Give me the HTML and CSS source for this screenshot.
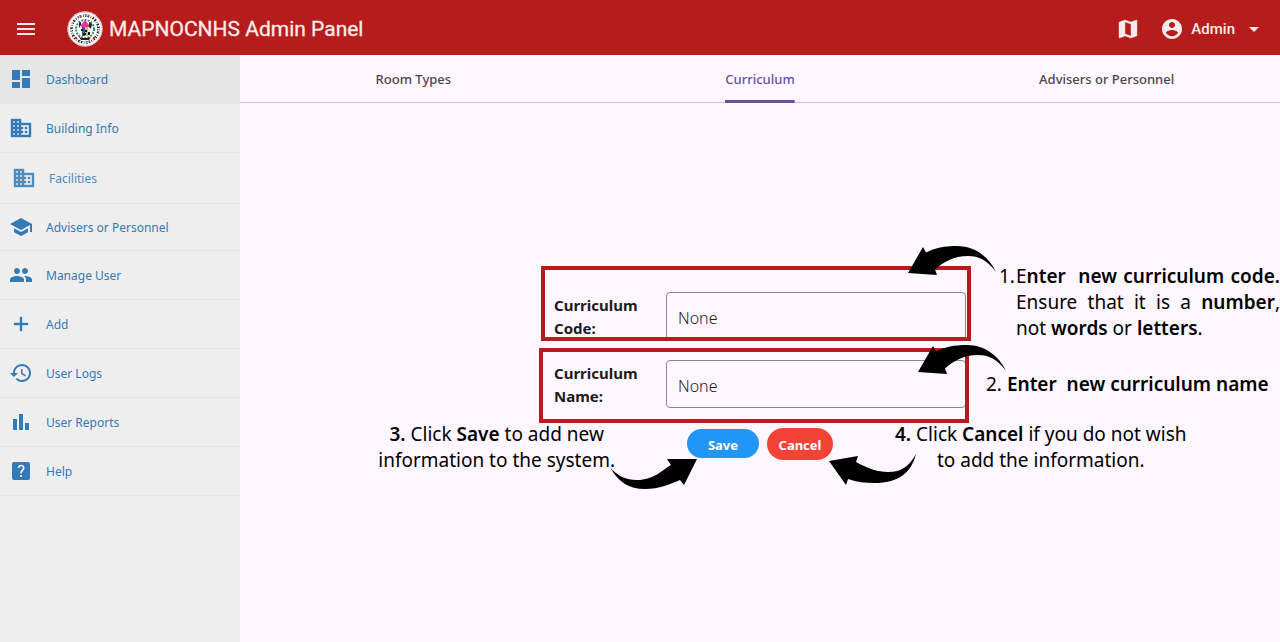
FILE: index.html
```html
<!DOCTYPE html>
<html lang="en">
<head>
<meta charset="utf-8">
<meta name="viewport" content="width=device-width, initial-scale=1">
<title>MAPNOCNHS Admin Panel</title>
<link rel="stylesheet" href="styles.css">
</head>
<body>
<svg class="defs" aria-hidden="true">
  <symbol id="building" viewBox="0 0 24 24"><path d="M12 7V3H2v18h20V7H12zM6 19H4v-2h2v2zm0-4H4v-2h2v2zm0-4H4V9h2v2zm0-4H4V5h2v2zm4 12H8v-2h2v2zm0-4H8v-2h2v2zm0-4H8V9h2v2zm0-4H8V5h2v2zm10 12h-8v-2h2v-2h-2v-2h2v-2h-2V9h8v10zm-2-8h-2v2h2v-2zm0 4h-2v2h2v-2z"/></symbol>
  <symbol id="arrow-in" viewBox="0 0 88 32"><path d="M0 28 15 2 18 7.500C27 3 36 1 49 1C67 1 81 12 88 27C79 15 71 11 60 11C46 11 35 17 27 24.500L29 30Z"/></symbol>
</svg>

<header class="topbar">
  <button class="icon-button" aria-label="Menu"><svg class="icon" viewBox="0 0 24 24"><path d="M3 18h18v-2H3v2zm0-5h18v-2H3v2zm0-7v2h18V6H3z"/></svg></button>
  <div class="brand">
    <svg class="seal" viewBox="0 0 36 36" aria-hidden="true">
      <circle cx="18" cy="18" r="17.500" fill="#fff"/>
      <circle cx="18" cy="18" r="17" fill="none" stroke="#d9b5b0" stroke-width="1"/>
      <circle cx="18" cy="18" r="13.500" fill="none" stroke="#222" stroke-width="2.500" stroke-dasharray="1.500 1 2 1.400 .8 1.200"/>
      <circle cx="18" cy="18" r="13.700" fill="none" stroke="#fff" stroke-width=".8" stroke-dasharray="2 1.700"/>
      <circle cx="18" cy="18" r="9" fill="none" stroke="#3d8a62" stroke-width="2" stroke-dasharray="2 1.200" />
      <path d="M12 12l2-1v3l-2 3zM22 11l3 2-1 5-2-2z" fill="#222"/>
      <path d="M14 14l4-5 4 5v2h-8z" fill="#e23893"/>
      <path d="M15 16h3v9h-3z" fill="#2f5fa0"/><path d="M18 16h3v9h-3z" fill="#e6b84a"/>
      <path d="M14 18h2v2h-2zM18 19h2v2h-2zM16 22h3v2h-3zM21 21h2v3h-2z" fill="#151515"/>
      <path d="M12 26l3 1h6l3-1-2 3h-8z" fill="#222"/>
      <path d="M8 26h2v2H8zM26 26h2v2h-2z" fill="#c62828"/>
    </svg>
    <h1 class="title">MAPNOCNHS Admin Panel</h1>
  </div>
  <div class="account">
    <button class="icon-button" aria-label="Map"><svg class="icon bold" viewBox="0 0 24 24"><path d="M20.500 3l-.16.03L15 5.100 9 3 3.360 4.900c-.21.07-.36.25-.36.48V20.500c0 .28.22.5.5.5l.16-.03L9 18.900l6 2.100 5.640-1.900c.21-.07.36-.25.36-.48V3.500c0-.28-.22-.5-.5-.5zM15 19l-6-2.110V5l6 2.110V19z"/></svg></button>
    <button class="user">
      <svg class="icon" viewBox="0 0 24 24" aria-hidden="true"><path d="M12 2C6.480 2 2 6.480 2 12s4.480 10 10 10 10-4.480 10-10S17.520 2 12 2zm0 3c1.660 0 3 1.340 3 3s-1.340 3-3 3-3-1.340-3-3 1.340-3 3-3zm0 14.200c-2.500 0-4.710-1.280-6-3.220.03-1.990 4-3.080 6-3.080 1.990 0 5.970 1.090 6 3.080-1.290 1.940-3.500 3.220-6 3.220z"/></svg>
      <span>Admin</span>
      <svg class="icon caret" viewBox="0 0 24 24" aria-hidden="true"><path d="M7 10l5 5 5-5z"/></svg>
    </button>
  </div>
</header>

<div class="body">
  <nav class="sidebar" aria-label="Main">
    <a class="item active" href="#"><svg class="icon" viewBox="0 0 24 24"><path d="M3 13h8V3H3v10zm0 8h8v-6H3v6zm10 0h8V11h-8v10zm0-18v6h8V3h-8z"/></svg>Dashboard</a>
    <a class="item" href="#"><svg class="icon bold"><use href="#building"/></svg>Building Info</a>
    <a class="item nested" href="#"><svg class="icon bold"><use href="#building"/></svg>Facilities</a>
    <a class="item compact" href="#"><svg class="icon" viewBox="0 0 24 24"><path d="M5 13.180v4L12 21l7-3.820v-4L12 17l-7-3.820zM12 3L1 9l11 6 9-4.910V17h2V9L12 3z"/></svg>Advisers or Personnel</a>
    <a class="item" href="#"><svg class="icon" viewBox="0 0 24 24"><path d="M16 11c1.660 0 2.990-1.340 2.990-3S17.660 5 16 5c-1.660 0-3 1.340-3 3s1.340 3 3 3zm-8 0c1.660 0 2.990-1.340 2.990-3S9.660 5 8 5C6.340 5 5 6.340 5 8s1.340 3 3 3zm0 2c-2.330 0-7 1.170-7 3.500V19h14v-2.500c0-2.330-4.670-3.500-7-3.500zm8 0c-.29 0-.62.02-.97.05 1.160.84 1.970 1.970 1.970 3.450V19h6v-2.500c0-2.330-4.670-3.500-7-3.500z"/></svg>Manage User</a>
    <a class="item" href="#"><svg class="icon bold" viewBox="0 0 24 24"><path d="M19 13h-6v6h-2v-6H5v-2h6V5h2v6h6v2z"/></svg>Add</a>
    <a class="item" href="#"><svg class="icon" viewBox="0 0 24 24"><path d="M13 3c-4.970 0-9 4.030-9 9H1l3.890 3.890.07.14L9 12H6c0-3.870 3.130-7 7-7s7 3.130 7 7-3.130 7-7 7c-1.930 0-3.680-.79-4.940-2.060l-1.420 1.420C8.270 19.990 10.510 21 13 21c4.970 0 9-4.030 9-9s-4.030-9-9-9zm-1 5v5l4.280 2.540.72-1.210-3.500-2.080V8H12z"/></svg>User Logs</a>
    <a class="item" href="#"><svg class="icon" viewBox="0 0 24 24"><path d="M4 9h4v11H4zM16 13h4v7h-4zM10 4h4v16h-4z"/></svg>User Reports</a>
    <a class="item" href="#"><svg class="icon" viewBox="0 0 24 24"><path fill-rule="evenodd" d="M5 3h14a2 2 0 0 1 2 2v14a2 2 0 0 1-2 2H5a2 2 0 0 1-2-2V5a2 2 0 0 1 2-2zm6.200 13v2h1.800v-2zM8.800 9h1.600c0-1 .7-1.700 1.700-1.700s1.700.7 1.700 1.600c0 1.500-2.600 2-2.600 5v.6h1.700c0-2.500 2.600-3 2.600-5.700C15.500 7 14 5.800 12.100 5.800S8.800 7 8.800 9z"/></svg>Help</a>
  </nav>

  <main class="main">
    <div class="tabs" role="tablist">
      <button class="tab" role="tab"><span>Room Types</span></button>
      <button class="tab selected" role="tab" aria-selected="true"><span>Curriculum</span></button>
      <button class="tab" role="tab"><span>Advisers or Personnel</span></button>
    </div>
    <section class="panel">
      <form class="form">
        <div class="row">
          <label for="code">Curriculum Code:</label>
          <input id="code" type="text" value="None">
        </div>
        <div class="row">
          <label for="name">Curriculum Name:</label>
          <input id="name" type="text" value="None">
        </div>
        <div class="actions">
          <button class="save" type="button">Save</button>
          <button class="cancel" type="button">Cancel</button>
        </div>

        <div class="highlight highlight-code"></div>
        <div class="highlight highlight-name"></div>

        <div class="note note-code"><span>1.</span><p>E<b>nter &nbsp;new curriculum code.</b> Ensure that it is a <b>number</b>, not <b>words</b> or <b>letters</b>.</p></div>
        <p class="note note-name">2. <b>Enter &nbsp;new curriculum name</b></p>
        <p class="note note-save"><b>3.</b> Click <b>Save</b> to add new<br>information to the system.</p>
        <p class="note note-cancel"><b>4.</b> Click <b>Cancel</b> if you do not wish<br>to add the information.</p>

        <svg class="arrow arrow-code"><use href="#arrow-in"/></svg>
        <svg class="arrow arrow-name"><use href="#arrow-in"/></svg>
        <svg class="arrow arrow-save" viewBox="0 0 88 32"><path d="M87 1 57 1 61 7C52 12 44 22 27 22C16 22 7 18 0 9C8 24 19 31 35 31C49 31 61 26 70 22L74 27Z"/></svg>
        <svg class="arrow arrow-cancel" viewBox="0 0 88 32"><path d="M0 7 29 2 27 8C38 14 48 18 59 18C73 18 80 12 87 0C82 20 68 29 46 29C36 29 28 28 19 25L17 31Z"/></svg>
      </form>
    </section>
  </main>
</div>
</body>
</html>
```
FILE: styles.css
```css
* { box-sizing: border-box; }

body {
  margin: 0;
  min-height: 100vh;
  display: flex;
  flex-direction: column;
  overflow-x: hidden;
  background: #fef7ff;
  font-family: "Noto Sans", "Open Sans", sans-serif;
}

button { border: 0; padding: 0; background: none; color: inherit; font: inherit; cursor: pointer; }
p { margin: 0; }
.defs { position: absolute; width: 0; height: 0; }
.icon { width: 24px; height: 24px; fill: currentColor; flex: none; display: block; }
.icon.bold { stroke: currentColor; stroke-width: .4; }

.topbar {
  height: 55px;
  flex: none;
  display: flex;
  align-items: center;
  padding: 3px 14px 0;
  background: #b71c1c;
  color: #fbeaea;
  font-family: Roboto, sans-serif;
}
.brand { display: flex; align-items: center; gap: 6px; margin-left: 29px; }
.seal { width: 36px; height: 36px; }
.title { margin: 0; font-size: 21px; font-weight: 400; line-height: 26px; -webkit-text-stroke: .3px currentColor; }
.account { margin-left: auto; display: flex; align-items: center; gap: 20px; }
.user { display: flex; align-items: center; gap: 7px; font-size: 15px; font-weight: 500; }

.body { flex: 1; display: flex; }

.sidebar { width: 240px; flex: none; background: #eee; }
.item {
  display: flex;
  align-items: center;
  gap: 13px;
  height: 49px;
  padding-left: 9px;
  border-bottom: 1px solid #e4e4e4;
  color: #337ab7;
  font-size: 12px;
  text-decoration: none;
}
.item.active { background: #e6e6e6; }
.item.nested { height: 51px; padding-left: 12px; opacity: .85; }
.item.compact { height: 47px; }

.main { flex: 1; min-width: 0; display: flex; flex-direction: column; }
.tabs { height: 48px; display: grid; grid-template-columns: repeat(3, 1fr); border-bottom: 1px solid #cac4d0; }
.tab { display: flex; justify-content: center; color: #49454f; font-size: 13px; font-weight: 500; }
.tab span { height: 48px; line-height: 48px; }
.tab.selected { color: #6750a4; }
.tab.selected span { background: linear-gradient(#6750a4, #6750a4) bottom / 100% 3px no-repeat; }

.panel { flex: 1; display: flex; align-items: center; justify-content: center; padding-top: 6px; }
.form { position: relative; width: 412px; display: flex; flex-direction: column; gap: 20px; }
.row { display: flex; align-items: center; height: 48px; }
.row label { width: 112px; padding-top: 2px; font-size: 15px; font-weight: 700; line-height: 23px; color: #1d1b20; }
.row input {
  flex: 1;
  min-width: 0;
  height: 48px;
  padding: 4px 11px 0;
  border: 1px solid #8a858e;
  border-radius: 4px;
  background: transparent;
  color: #1d1b20;
  font: 300 16px "Noto Sans", sans-serif;
}
.actions { display: flex; align-items: center; justify-content: center; gap: 8px; height: 32px; color: #fff; font-size: 13px; font-weight: 700; }
.save { width: 72px; height: 29px; padding-top: 2px; border-radius: 16px; background: #2196f3; }
.cancel { width: 66px; height: 32px; padding-top: 2px; border-radius: 16px; background: #f44336; }

/* Guide overlays, anchored to the form */
.highlight { position: absolute; width: 430px; height: 75px; border: 4px solid #b71c1c; pointer-events: none; }
.highlight-code { left: -13px; top: -26px; }
.highlight-name { left: -15px; top: 56px; }
.note { position: absolute; color: #000; font-size: 19px; line-height: 26px; white-space: nowrap; }
.note b { font-weight: 600; }
.note-code { left: 445px; top: -29px; display: flex; }
.note-code span { width: 17px; }
.note-code p { width: 264px; white-space: normal; text-align: justify; }
.note-name { left: 432px; top: 79px; }
.note-save { right: 351px; top: 129px; text-align: center; }
.note-cancel { left: 341px; top: 129px; text-align: center; }
.arrow { position: absolute; width: 88px; height: 32px; pointer-events: none; }
.arrow-code { left: 354px; top: -47px; }
.arrow-name { left: 364px; top: 52px; }
.arrow-save { left: 56px; top: 166px; }
.arrow-cancel { left: 275px; top: 162px; }
```
